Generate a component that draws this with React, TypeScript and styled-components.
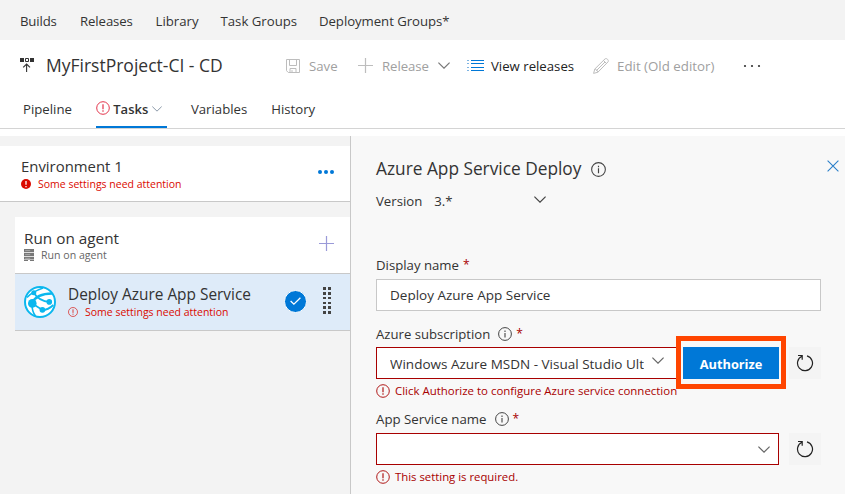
import React from 'react';
import styled, { createGlobalStyle } from 'styled-components';

const Global = createGlobalStyle`
  * { box-sizing: border-box; }
  body { margin: 0; background: #fff; color: #333; font-family: 'Open Sans', 'Noto Sans', sans-serif; overflow: hidden; }
  button { font-family: inherit; border: 0; padding: 0; background: none; color: inherit; }
`;

const Page = styled.div`
  width: 845px;
  height: 494px;
  display: flex;
  flex-direction: column;
`;

const Text = styled.span<{ $size?: number; $spacing?: number; $weight?: number; $color?: string }>`
  font-size: ${p => p.$size ?? 13.2}px;
  letter-spacing: ${p => p.$spacing ?? 0}px;
  font-weight: ${p => p.$weight ?? 400};
  color: ${p => p.$color ?? 'inherit'};
  line-height: 20px;
  white-space: pre;
`;

const HubNav = styled.nav`
  height: 40px;
  flex: none;
  display: flex;
  align-items: center;
  padding: 2px 0 0 20px;
  background: #f3f3f3;
`;

const HubLink = styled.a<{ $width: number }>`
  display: flex;
  flex: none;
  width: ${p => p.$width}px;
`;

const TitleBar = styled.header`
  height: 50px;
  flex: none;
  display: flex;
  align-items: center;
  padding-left: 20px;
`;

const Title = styled.h1`
  margin: 0 10px 1px 0;
  width: 241px;
  padding-left: 11px;
  font-weight: 400;
  display: flex;
`;

const Command = styled.button<{ $width: number; $gap: number }>`
  display: flex;
  flex: none;
  align-items: center;
  width: ${p => p.$width}px;
  padding-top: 1px;
  gap: ${p => p.$gap}px;
`;

const TabBar = styled.nav`
  height: 39px;
  flex: none;
  display: flex;
  padding-left: 23px;
  border-bottom: 1px solid #d4d4d4;
`;

const Tab = styled.a<{ $gap: number; $active?: boolean }>`
  display: flex;
  flex: none;
  align-items: center;
  height: 38px;
  margin-right: ${p => p.$gap}px;
  padding-top: ${p => (p.$active ? 2 : 0)}px;
  border-bottom: ${p => (p.$active ? '2px solid #0078d7' : '0')};
  width: ${p => (p.$active ? '71px' : 'auto')};
`;

const TabAlert = styled.span`
  display: flex;
  margin-bottom: 3px;
`;

const Body = styled.main`
  margin-top: 7px;
  flex: 1;
  display: flex;
  min-height: 0;
`;

const Sidebar = styled.aside`
  width: 351px;
  flex: none;
  padding-top: 10px;
  background: #f3f3f3;
  border-right: 1px solid #c8c8c8;
`;

const Environment = styled.section`
  height: 56px;
  display: flex;
  align-items: center;
  padding: 0 16px 4px 21px;
  background: #fff;
  border-bottom: 1px solid #c8c8c8;
`;

const TaskList = styled.section`
  margin: 15px 0 0 15px;
`;

const TaskRow = styled.div<{ $selected?: boolean }>`
  height: 57px;
  display: flex;
  align-items: center;
  padding: ${p => (p.$selected ? '0 15px 0 9px' : '0 16px 4px 9px')};
  background: ${p => (p.$selected ? '#deebf9' : '#fff')};
  border-bottom: 1px solid #c8c8c8;
`;

const RowText = styled.div<{ $indent?: number; $top?: number }>`
  flex: 1;
  display: flex;
  flex-direction: column;
  margin-left: ${p => p.$indent ?? 0}px;
  padding-top: ${p => p.$top ?? 0}px;
`;

const SubLine = styled.div<{ $gap: number }>`
  display: flex;
  align-items: center;
  gap: ${p => p.$gap}px;
  height: 15px;
`;

const CheckBadge = styled.div`
  width: 23px;
  height: 23px;
  margin: 0 16px 2px 0;
  display: grid;
  place-items: center;
  border-radius: 50%;
  border: 1px solid #fff;
  background: #0078d7;
`;

const DragHandle = styled.div`
  display: grid;
  grid-template-columns: 3px 3px;
  gap: 2.2px;
  margin: 0 4px 3px 0;
  i { width: 3px; height: 2.6px; background: #444; }
`;

const Details = styled.section`
  flex: 1;
  padding: 22px 24px 0 25px;
  background: #f8f8f8;
`;

const DetailsHeader = styled.div`
  display: flex;
  align-items: center;
  height: 22px;
  gap: 10px;
`;

const CloseButton = styled.button`
  display: flex;
  margin: -6px -18px 0 auto;
`;

const VersionRow = styled.div`
  display: flex;
  align-items: center;
  height: 22px;
  margin-top: 10px;
`;

const VersionSelect = styled.div`
  display: flex;
  align-items: center;
  justify-content: space-between;
  width: 112px;
  margin-left: 12px;
  svg { margin-bottom: 3px; }
`;

const FieldLabel = styled.label<{ $top: number }>`
  display: flex;
  align-items: center;
  height: 20px;
  margin-top: ${p => p.$top}px;
  gap: 8px;
`;

const Required = styled.span<{ $pull?: number }>`
  margin-left: ${p => p.$pull ?? 0}px;
  color: #a80000;
  font-size: 12px;
  line-height: 20px;
`;

const FieldRow = styled.div<{ $top: number }>`
  display: flex;
  height: 32px;
  margin-top: ${p => p.$top}px;
`;

const Input = styled.div<{ $width: number; $invalid?: boolean }>`
  width: ${p => p.$width}px;
  flex: none;
  height: 32px;
  display: flex;
  align-items: center;
  padding: 0 8px 0 13px;
  background: #fff;
  border: 1px solid ${p => (p.$invalid ? '#a80000' : '#c8c8c8')};
`;

const Clip = styled.div`
  width: 254px;
  overflow: hidden;
  display: flex;
  padding-top: 1px;
  margin-right: 8px;
`;

const SelectArrow = styled.span`
  display: flex;
  margin-bottom: 5px;
`;

const Spacer = styled.div`
  flex: 1;
`;

const AuthorizeButton = styled.button`
  position: relative;
  width: 96px;
  height: 32px;
  margin-left: 4px;
  padding-top: 1px;
  background: #0078d7;
  color: #fff;
  &::after {
    content: '';
    position: absolute;
    inset: -11px -7px -10px;
    border: 5px solid #ff4500;
  }
`;

const RefreshButton = styled.button`
  width: 32px;
  height: 32px;
  margin-left: 10px;
  display: grid;
  place-items: center;
  background: #f4f4f4;
`;

const ErrorLine = styled.div`
  display: flex;
  align-items: center;
  height: 20px;
  margin-top: 2px;
  gap: 5px;
`;

const RED = '#a80000';
const ALERT = '#da0a00';
const MUTED = '#a0a0a0';

const Chevron = ({ color = '#444', width = 12 }: { color?: string; width?: number }) => (
  <svg width={width} height={width / 2 + 1} viewBox="0 0 12 7" fill="none" stroke={color} strokeWidth="1.2">
    <path d="M.4.6 6 6.1 11.6.6" />
  </svg>
);

const ErrorCircle = ({ size = 14, color = RED }: { size?: number; color?: string }) => (
  <svg width={size} height={size} viewBox="0 0 14 14">
    <circle cx="7" cy="7" r="6.3" fill="none" stroke={color} strokeWidth=".9" />
    <path d="M7 3.3v4.9M7 9.3v1.5" stroke={color} strokeWidth="1.1" />
  </svg>
);

const ErrorFilled = () => (
  <svg width="10" height="10" viewBox="0 0 10 10">
    <circle cx="5" cy="5" r="5" fill={ALERT} />
    <path d="M5 2v3.8M5 6.9v1.3" stroke="#fff" strokeWidth="1.3" />
  </svg>
);

const Info = ({ size = 14 }: { size?: number }) => (
  <svg width={size} height={size} viewBox="0 0 14 14">
    <circle cx="7" cy="7" r="6.4" fill="none" stroke="#444" />
    <path d="M7 5.9v4.6M7 3.5v1.4" stroke="#444" strokeWidth="1.1" />
  </svg>
);

const ReleaseIcon = () => (
  <svg width="15" height="16" viewBox="0 0 15 16">
    <path fill="#333" d="M0 1h4v4H0zM10 1h4v4h-4z" />
    <path fill="none" stroke="#333" d="M5.5 1.5h3v3h-3z" />
    <path fill="none" stroke="#333" strokeWidth="1.1" d="M6.6 15V7M3.2 10.4 6.6 7 10 10.4" />
  </svg>
);

const SaveIcon = () => (
  <svg width="14" height="14" viewBox="0 0 14 14" fill="none" stroke="#bdbdbd">
    <path d="M.5.5h13v13H2.3L.5 11.7zM3.5.5v6h7v-6M4 13.5V9.5h6v4M6 13.5v-2.4" />
  </svg>
);

const PlusIcon = ({ size, color }: { size: number; color: string }) => (
  <svg width={size} height={size} viewBox="0 0 16 16" stroke={color} strokeWidth="1.3">
    <path d="M8 0v16M0 8h16" />
  </svg>
);

const ListIcon = () => (
  <svg width="17" height="11" viewBox="0 0 17 11" shapeRendering="crispEdges">
    <path stroke="#0078d7" d="M4 .5h13M4 3.5h13M4 7.5h13M4 10.5h13" />
    <path stroke="#7db4e3" d="M0 .5h2M0 3.5h2M0 7.5h2M0 10.5h2" />
  </svg>
);

const PencilIcon = () => (
  <svg width="16" height="16" viewBox="0 0 16 16" fill="none" stroke="#bdbdbd">
    <path d="M.6 15.4 1.8 11 12 .9c1.6-1.2 4.3 1.4 3 3L4.9 14.2zM1.8 11c1.4.2 2.8 1.6 3.1 3.2M10.4 2.4l3.1 3.1M3.3 12.7 12 4" />
  </svg>
);

const Dots = ({ color, radius, step }: { color: string; radius: number; step: number }) => (
  <svg width={step * 2 + 4} height="4" viewBox={`0 0 ${step * 2 + 4} 4`} fill={color}>
    {[0, 1, 2].map(i => <circle key={i} cx={2 + i * step} cy="2" r={radius} />)}
  </svg>
);

const ServerIcon = () => (
  <svg width="10" height="12" viewBox="0 0 10 12">
    <path fill="#777" d="M0 0h10v3.3H0zM0 4h10v3.3H0zM0 8h10v2.6H0zM0 11h4v1H0zM6 11h4v1H6z" />
    <path stroke="#bbb" strokeWidth=".7" d="M1.2 1.6h5M1.2 5.6h5M1.2 9.3h5" />
  </svg>
);

const WebAppIcon = () => (
  <svg width="32" height="32" viewBox="0 0 32 32">
    <circle cx="16" cy="16" r="15" fill="#fff" stroke="#0bb7ee" strokeWidth="2" />
    <g fill="none" stroke="#0bb7ee">
      <path strokeWidth="2.6" d="M8 17C11 11 17 7.5 28 7.5" />
      <path strokeWidth="1.6" d="M9 18 18.5 24M8 18c0 5 1 9 3.500 12" />
      <path strokeWidth="1.8" d="M9.500 6.500C13 12 18 15.500 25.500 16M18.300 24c4 0 8-2 11-5" />
      <path strokeWidth="1.4" d="M3 11.500C6 8 12 4.500 19 2" />
    </g>
    <g fill="#0bb7ee">
      <circle cx="8.300" cy="17.400" r="4.300" />
      <circle cx="25.300" cy="15.900" r="2.800" />
      <circle cx="18.400" cy="23.800" r="2.900" />
      <circle cx="9.800" cy="6.800" r="2.500" />
    </g>
  </svg>
);

const CheckIcon = () => (
  <svg width="11" height="8" viewBox="0 0 11 8" fill="none" stroke="#fff" strokeWidth="1.3">
    <path d="M.6 4 3.9 7.1 10.4.7" />
  </svg>
);

const CloseIcon = () => (
  <svg width="12" height="12" viewBox="0 0 12 12" stroke="#2b7fc9" strokeWidth="1.1">
    <path d="m.6.6 10.8 10.8M11.4.6.6 11.4" />
  </svg>
);

const RefreshIcon = () => (
  <svg width="18" height="18" viewBox="0 0 18 18" fill="none" stroke="#222" strokeWidth="1.2">
    <path d="M5.9 2.3A7.5 7.5 0 1 0 11 1.9M2 1.5h4.2v4.2" />
  </svg>
);

const hubs: [string, number, number][] = [
  ['Builds', 60, -0.15],
  ['Releases', 75.5, -0.1],
  ['Library', 65, 0],
  ['Task Groups', 98.5, 0],
  ['Deployment Groups*', 140, -0.05],
];

export default function App() {
  return (
    <Page>
      <Global />
      <HubNav>
        {hubs.map(([name, width, spacing]) => (
          <HubLink key={name} $width={width}><Text $spacing={spacing}>{name}</Text></HubLink>
        ))}
      </HubNav>
      <TitleBar>
        <ReleaseIcon />
        <Title><Text $size={17.5}>MyFirstProject-CI - CD</Text></Title>
        <Command $width={72} $gap={9}><SaveIcon /><Text $color={MUTED}>Save</Text></Command>
        <Command $width={109} $gap={9}>
          <PlusIcon size={15} color="#bdbdbd" /><Text $color={MUTED} $spacing={-0.05}>Release</Text><Chevron color="#777" />
        </Command>
        <Command $width={126} $gap={7}><ListIcon /><Text $color="#222">View releases</Text></Command>
        <Command $width={150} $gap={8}><PencilIcon /><Text $size={13.3} $color={MUTED}>Edit (Old editor)</Text></Command>
        <Command $width={20} $gap={0}><Dots color="#333" radius={1.1} step={7} /></Command>
      </TitleBar>
      <TabBar>
        <Tab $gap={24}><Text>Pipeline</Text></Tab>
        <Tab $gap={24} $active>
          <TabAlert><ErrorCircle color="#e0203a" /></TabAlert>
          <Text $weight={600} $size={13}> Tasks </Text><Chevron color="#8a98a8" width={10} />
        </Tab>
        <Tab $gap={24}><Text>Variables</Text></Tab>
        <Tab $gap={0}><Text>History</Text></Tab>
      </TabBar>
      <Body>
        <Sidebar>
          <Environment>
            <RowText $top={4}>
              <Text $size={14.9}>Environment 1</Text>
              <SubLine $gap={7}><ErrorFilled /><Text $size={10.5} $color={ALERT}>Some settings need attention</Text></SubLine>
            </RowText>
            <Dots color="#0078d7" radius={2} step={6} />
          </Environment>
          <TaskList>
            <TaskRow>
              <RowText $top={4}>
                <Text $size={15.3}>Run on agent</Text>
                <SubLine $gap={7}><ServerIcon /><Text $size={10.6} $color="#666">Run on agent</Text></SubLine>
              </RowText>
              <PlusIcon size={15} color="#9a9ad8" />
            </TaskRow>
            <TaskRow $selected>
              <WebAppIcon />
              <RowText $indent={12}>
                <Text $size={15.4}>Deploy Azure App Service</Text>
                <SubLine $gap={7}>
                  <ErrorCircle size={10} color={ALERT} /><Text $size={10.5} $color={ALERT}>Some settings need attention</Text>
                </SubLine>
              </RowText>
              <CheckBadge><CheckIcon /></CheckBadge>
              <DragHandle>{Array.from({ length: 12 }, (_, i) => <i key={i} />)}</DragHandle>
            </TaskRow>
          </TaskList>
        </Sidebar>
        <Details>
          <DetailsHeader>
            <Text $size={17.3}>Azure App Service Deploy</Text>
            <Info size={15} />
            <CloseButton><CloseIcon /></CloseButton>
          </DetailsHeader>
          <VersionRow>
            <Text>Version</Text>
            <VersionSelect><Text>3.*</Text><Chevron /></VersionSelect>
          </VersionRow>
          <FieldLabel $top={43}><Text>Display name</Text><Required $pull={-4}>*</Required></FieldLabel>
          <FieldRow $top={4}>
            <Input $width={445}><Text $size={13.5}>Deploy Azure App Service</Text></Input>
          </FieldRow>
          <FieldLabel $top={13}><Text $size={13.15}>Azure subscription</Text><Info /><Required $pull={-4}>*</Required></FieldLabel>
          <FieldRow $top={3}>
            <Input $width={303} $invalid>
              <Clip><Text $size={13.5}>Windows Azure MSDN - Visual Studio Ult</Text></Clip>
              <SelectArrow><Chevron color="#666" /></SelectArrow>
            </Input>
            <AuthorizeButton><Text $size={12.8} $weight={700}>Authorize</Text></AuthorizeButton>
            <RefreshButton><RefreshIcon /></RefreshButton>
          </FieldRow>
          <ErrorLine><ErrorCircle /><Text $size={11.45} $color={RED}>Click Authorize to configure Azure service connection</Text></ErrorLine>
          <FieldLabel $top={8}><Text $size={13.25}>App Service name</Text><Info /><Required $pull={-4}>*</Required></FieldLabel>
          <FieldRow $top={4}>
            <Input $width={403} $invalid><Spacer /><Chevron color="#666" /></Input>
            <RefreshButton><RefreshIcon /></RefreshButton>
          </FieldRow>
          <ErrorLine><ErrorCircle /><Text $size={11.35} $color={RED}>This setting is required.</Text></ErrorLine>
        </Details>
      </Body>
    </Page>
  );
}
